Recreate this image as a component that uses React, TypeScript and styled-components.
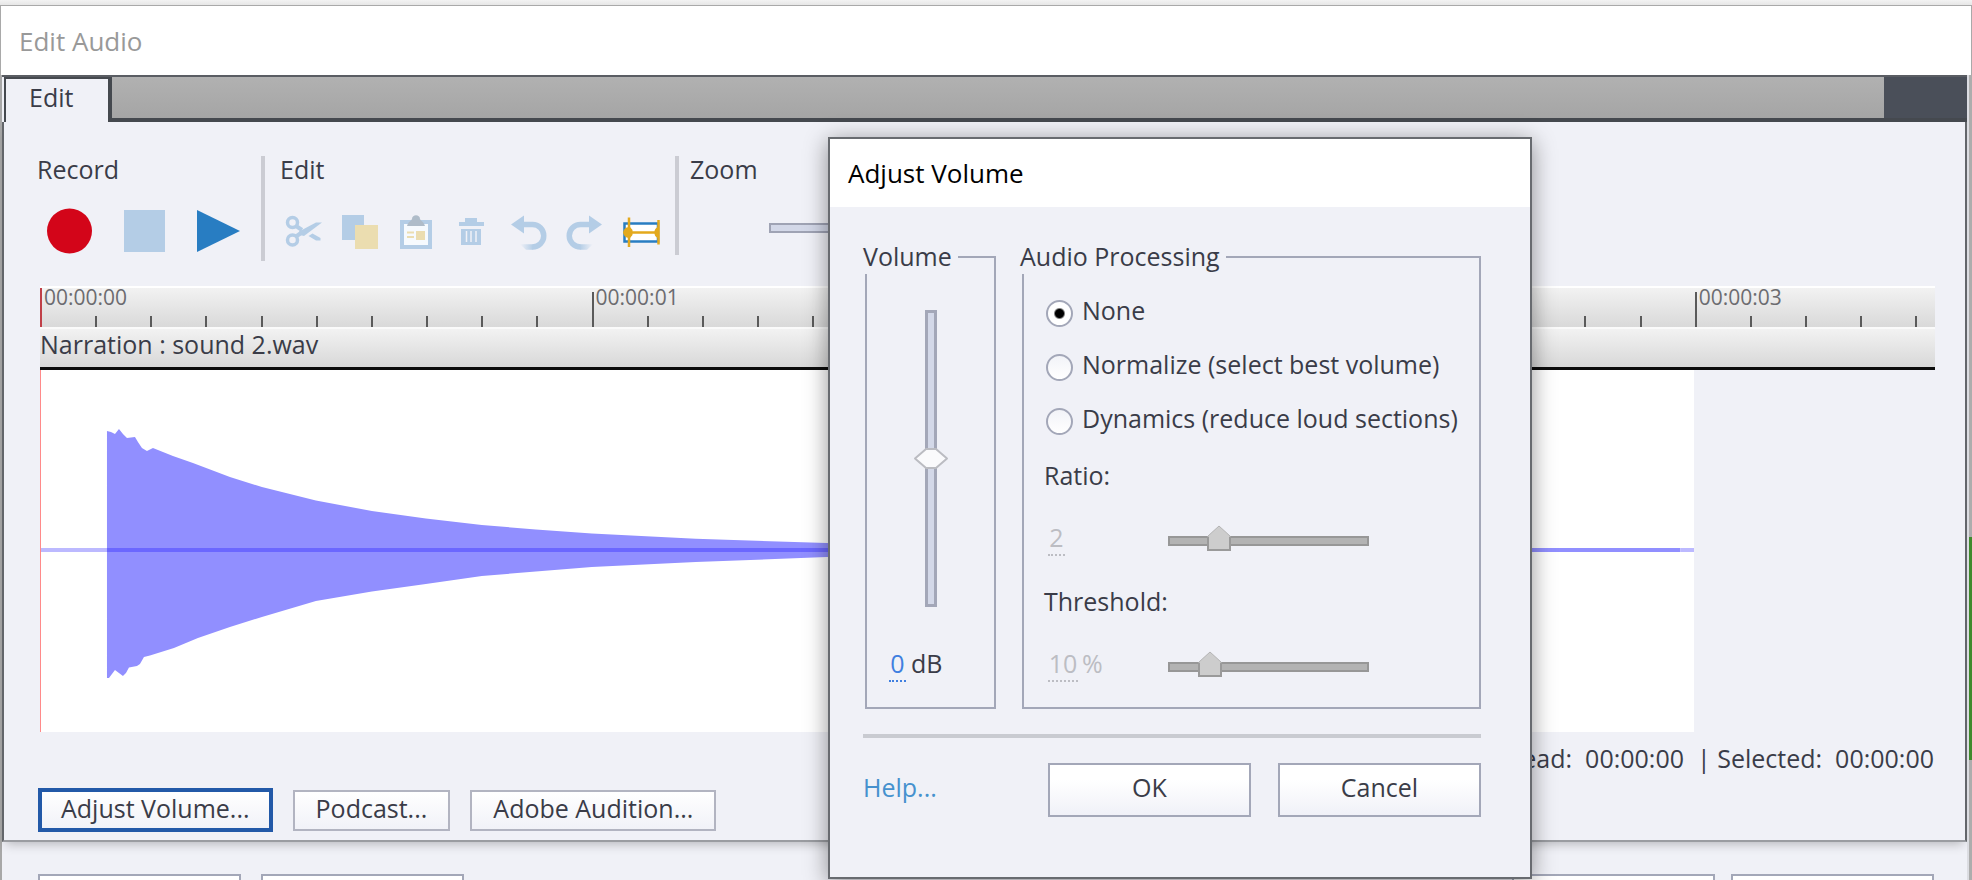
import React, { useState } from "react";
import styled, { createGlobalStyle, css } from "styled-components";

const color = {
  panel: "#f0f1f7",
  text: "#3a3c48",
  line: "#a3a7b8",
  dark: "#45494f",
  paleBlue: "#b4cde6",
  paleGold: "#ebddb0",
  blue: "#287dc2",
  gold: "#e3a91d",
};

const GlobalStyle = createGlobalStyle`
  * { box-sizing: border-box; }
  body {
    margin: 0;
    background: #f0f0f0;
    color: ${color.text};
    font: 25px/34px "Open Sans", "Noto Sans", sans-serif;
  }
  button, input { font: inherit; color: inherit; }
`;

const Desktop = styled.div`
  position: relative;
  height: 100vh;
  overflow: hidden;
  display: flex;
  flex-direction: column;
  padding-top: 5px;
  background: linear-gradient(#f3f3f3, #e6e6e6 5px);
`;

const TitleBar = styled.header<{ $active?: boolean }>`
  display: flex;
  align-items: center;
  height: ${(p) => (p.$active ? 68 : 70)}px;
  flex: none;
  padding: 0 18px;
  background: #fff;
  color: ${(p) => (p.$active ? "#000" : "#999")};
  ${(p) =>
    !p.$active &&
    css`
      border: 1px solid #a9a9a9;
      border-bottom: 0;
    `}
`;

const Title = styled.h1`
  margin: 0;
  font-size: 26px;
  font-weight: 400;
`;

const WindowBody = styled.div`
  flex: 1;
  display: flex;
  min-height: 0;
  background: ${color.panel};
`;

const LeftFrame = styled.div`
  width: 2px;
  background: #a8a8a8;
`;

const RightFrame = styled.div`
  width: 5px;
  flex: none;
  border-left: 2px solid #dcdde2;
  background: linear-gradient(#adadad 462px, #3f8a2c 462px, #3f8a2c 685px, #adadad 685px);
`;

const Content = styled.div`
  flex: 1;
  min-width: 0;
`;

const TabBar = styled.nav`
  display: flex;
  height: 47px;
  border-top: 2px solid #5a5d63;
`;

const Tab = styled.button`
  width: 108px;
  padding: 0 0 7px 23px;
  border: solid ${color.dark};
  border-width: 2px 4px 0 2px;
  margin-left: 2px;
  background: ${color.panel};
  text-align: left;
`;

const TabFiller = styled.div`
  flex: 1;
  border-bottom: 4px solid ${color.dark};
  background: linear-gradient(#b1b1b1, #a5a5a5);
`;

const TabEnd = styled.div`
  width: 83px;
  background: #4a4f59;
  border-bottom: 4px solid ${color.dark};
`;

const Panel = styled.main`
  padding: 34px 30px 8px 32px;
  border: 2px solid #63666b;
  border-top: 0;
  border-bottom-color: #9a9ca1;
  box-shadow: 0 6px 10px -4px rgba(0, 0, 0, 0.25);
`;

const Toolbar = styled.div`
  display: flex;
  align-items: flex-start;
  height: 130px;
`;

const ToolGroup = styled.section<{ $width: number; $inset: number }>`
  width: ${(p) => p.$width}px;
  padding-left: ${(p) => p.$inset}px;
`;

const GroupLabel = styled.h2`
  margin: 0 0 26px;
  padding-left: 1px;
  font-size: 25px;
  font-weight: 400;
  line-height: 26px;
`;

const Divider = styled.div<{ $height: number }>`
  width: 4px;
  height: ${(p) => p.$height}px;
  background: #cbccd3;
`;

const RecordTools = styled.div`
  display: flex;
  align-items: center;
  gap: 32px;
  height: 46px;
  padding-left: 11px;
`;

const EditTools = styled.div`
  display: flex;
  align-items: center;
  height: 46px;
  margin-left: -3px;
`;

const ZoomTools = styled.div`
  display: flex;
  height: 46px;
  padding: 4px 0 0 80px;
`;

const IconButton = styled.button<{ $width?: number }>`
  display: flex;
  justify-content: center;
  flex: none;
  width: ${(p) => (p.$width ? p.$width + "px" : "auto")};
  padding: 0;
  border: 0;
  background: none;
`;

const Track = styled.div`
  margin-left: 4px;
`;

const Ruler = styled.div`
  display: flex;
  height: 41px;
  border-top: 2px solid #fff;
  background: linear-gradient(#f2f2f2, #d9d9d9);
`;

const Mark = styled.div<{ $major: boolean; $start: boolean }>`
  display: flex;
  align-items: flex-end;
  flex: 0 0 2.911%;
  min-width: 0;
  white-space: nowrap;
  font-size: 21px;
  line-height: 18px;
  color: #6c6c70;
  &:last-child {
    flex: 1;
  }
  &::before {
    content: "";
    flex: none;
    width: 2px;
    height: ${(p) => (p.$start ? "100%" : p.$major ? "35px" : "11px")};
    background: ${(p) => (p.$start ? "#c04048" : "#5a5a5a")};
  }
`;

const MarkLabel = styled.span`
  align-self: flex-start;
  padding-left: 2px;
`;

const ClipName = styled.div`
  height: 43px;
  border-top: 2px solid #fafafa;
  border-bottom: 3px solid #0c0c0c;
  background: linear-gradient(#f2f2f2, #d8d8d8);
  line-height: 30px;
`;

const Waveform = styled.div`
  width: 87.3%;
  height: 362px;
  border-left: 1px solid #ff8a8a;
  background: #fff;
  svg { display: block; width: 100%; height: 100%; }
`;

const Status = styled.p`
  margin: 9px 1px 13px;
  text-align: right;
  white-space: pre;
`;

const ButtonRow = styled.div`
  display: flex;
  align-items: center;
  gap: 20px;
  margin-left: 2px;
`;

const PushButton = styled.button<{ $focused?: boolean }>`
  height: ${(p) => (p.$focused ? 44 : 41)}px;
  padding: 0 ${(p) => (p.$focused ? 19 : 21)}px 4px;
  border: ${(p) => (p.$focused ? "4px solid #2259a8" : "2px solid #b2b4c1")};
  background: linear-gradient(#fff, #f1f2f8);
  line-height: 30px;
`;

const Footer = styled.footer`
  display: flex;
  justify-content: space-between;
  padding: 32px 33px 0 36px;
`;

const FooterButtons = styled.div<{ $gap: number }>`
  display: flex;
  gap: ${(p) => p.$gap}px;
`;

const DialogButton = styled.button<{ $height: number }>`
  width: 203px;
  height: ${(p) => p.$height}px;
  padding: 0 0 7px;
  border: 2px solid ${color.line};
  background: linear-gradient(#fff 30%, #f0f1f8);
`;

const Dialog = styled.div`
  position: absolute;
  left: 828px;
  top: 137px;
  width: 704px;
  border: 2px solid #686b70;
  background: ${color.panel};
  box-shadow: 0 4px 22px rgba(0, 0, 0, 0.42);
`;

const DialogBody = styled.div`
  padding: 33px 49px 60px 33px;
`;

const Groups = styled.div`
  display: flex;
  gap: 26px;
  margin-left: 2px;
`;

const Group = styled.fieldset<{ $grow?: boolean }>`
  flex: ${(p) => (p.$grow ? "1" : "0 0 131px")};
  min-width: 0;
  margin: 0;
  padding: 0 0 25px;
  border: 2px solid ${color.line};
`;

const Legend = styled.legend`
  margin-left: -4px;
  padding: 0 6px 2px 0;
  background: ${color.panel};
  line-height: 32px;
`;

const VolumeControls = styled.div`
  display: flex;
  flex-direction: column;
  align-items: center;
  gap: 39px;
  padding-top: 36px;
`;

const ProcessingControls = styled.div`
  display: flex;
  flex-direction: column;
  padding: 12px 0 0 20px;
`;

const RadioRow = styled.label`
  display: flex;
  align-items: center;
  gap: 9px;
  height: 54px;
  padding-left: 2px;
`;

const RadioText = styled.span`
  padding-bottom: 6px;
  white-space: nowrap;
`;

const Radio = styled.input.attrs({ type: "radio" })`
  appearance: none;
  flex: none;
  width: 27px;
  height: 27px;
  margin: 0;
  border: 2px solid ${color.line};
  border-radius: 50%;
  background: linear-gradient(#f2f3f8, #fff);
  &:checked {
    background: radial-gradient(circle, #000 4px, #fff 6px);
  }
`;

const FieldLabel = styled.label<{ $top: number }>`
  margin-top: ${(p) => p.$top}px;
`;

const ValueRow = styled.div`
  display: flex;
  align-items: center;
  margin: 28px 0 0 4px;
  color: #bcbdc3;
`;

const VolumeValue = styled.div`
  display: flex;
  align-self: flex-start;
  gap: 5px;
  padding-left: 22px;
`;

const HotText = styled.input<{ $wide?: boolean; $active?: boolean }>`
  width: ${(p) => (p.$wide ? 30 : 17)}px;
  height: 36px;
  padding: 0;
  border: 0;
  border-bottom: 2px dotted ${(p) => (p.$active ? "#3f7fe0" : "#bcbdc3")};
  background: none;
  color: ${(p) => (p.$active ? "#3f7fe0" : "#bcbdc3")};
  text-align: center;
`;

const ValueCell = styled.div`
  display: flex;
  gap: 4px;
  width: 120px;
`;

const pentagon = `url("data:image/svg+xml,%3Csvg xmlns='http://www.w3.org/2000/svg' width='24' height='26'%3E%3Cpath d='M12 1L23 11V25H1V11z' fill='%23cdcdcd'/%3E%3Cpath d='M12 1L23 11V25H1V11z' fill='none' stroke='%23b4b4b4' stroke-width='1'/%3E%3Cpath d='M1 12V25H23V12' fill='none' stroke='%239a9a9a' stroke-width='2'/%3E%3C/svg%3E")`;
const diamond = `url("data:image/svg+xml,%3Csvg xmlns='http://www.w3.org/2000/svg' width='36' height='24'%3E%3Cpath d='M13 2H23L34 11.5L23 21H13L2 11.5z' fill='%23fafafc' stroke='%23bbbcc2' stroke-width='2' stroke-linejoin='round'/%3E%3C/svg%3E")`;

const HorizontalSlider = styled.input.attrs({ type: "range" })<{ $tinted?: boolean }>`
  appearance: none;
  width: 201px;
  height: 26px;
  margin: 0;
  background:
    linear-gradient(${(p) => (p.$tinted ? "#d3d8e8, #d3d8e8" : "#b3b3b3, #b3b3b3")}) 50% 13px / calc(100% - 4px) 6px no-repeat,
    linear-gradient(${(p) => (p.$tinted ? "#9fa3b4, #9fa3b4" : "#979797, #979797")}) 0 11px / 100% 10px no-repeat;
  &::-webkit-slider-thumb {
    appearance: none;
    width: 24px;
    height: 26px;
    background: ${pentagon};
  }
`;

const VerticalSlider = styled.input.attrs({ type: "range" })`
  appearance: none;
  writing-mode: vertical-lr;
  direction: rtl;
  width: 36px;
  height: 297px;
  margin: 0;
  background:
    linear-gradient(#d3d8e8, #d3d8e8) 50% 50% / 6px calc(100% - 6px) no-repeat,
    linear-gradient(${color.line}, ${color.line}) 50% 0 / 12px 100% no-repeat;
  &::-webkit-slider-thumb {
    appearance: none;
    width: 36px;
    height: 24px;
    background: ${diamond};
  }
`;

const Rule = styled.hr`
  height: 4px;
  margin: 25px 0;
  border: 0;
  background: #c9cbd1;
`;

const DialogActions = styled.div`
  display: flex;
  align-items: center;
  gap: 27px;
`;

const HelpLink = styled.a`
  margin-right: auto;
  padding-bottom: 6px;
  color: #4691ce;
  text-decoration: none;
`;

const CutIcon = () => (
  <svg width="40" height="40" fill="none" stroke={color.paleBlue}>
    <circle cx="8.500" cy="11.500" r="5" strokeWidth="3.500" />
    <circle cx="8.500" cy="29" r="5" strokeWidth="3.500" />
    <path d="M12 25.500L17 22" strokeWidth="4" />
    <path d="M12 15L18 19" strokeWidth="4" />
    <path d="M15 20.500L32 11.500H38L20 25L16 24z" fill={color.paleBlue} stroke="none" />
    <path d="M24.500 25L28.500 22.500L36.500 27V29.500H32z" fill={color.paleBlue} stroke="none" />
  </svg>
);

const CopyIcon = () => (
  <svg width="40" height="40">
    <path d="M2 4H24V29H2z" fill={color.paleBlue} />
    <path d="M15 14H38V38H15z" fill={color.paleGold} />
  </svg>
);

const PasteIcon = () => (
  <svg width="40" height="40">
    <path d="M6 11H34V36H6z" fill="#f6fafe" stroke={color.paleBlue} strokeWidth="4" />
    <path d="M11 15C12 11 15 10 16 8C16 3 24 3 24 8C25 10 28 11 29 15z" fill="#afbcc9" />
    <path d="M11 21.500H18M11 26H18" stroke={color.paleGold} strokeWidth="2" />
    <path d="M20 20H29V29H20z" fill={color.paleGold} />
  </svg>
);

const TrashIcon = () => (
  <svg width="40" height="40" fill={color.paleBlue}>
    <path d="M13 7H25V11H32V15H7V11H13z" />
    <path d="M9 18H29V34H9z" />
    <path d="M14.500 20V31M19 20V31M24 20V31" stroke={color.panel} strokeWidth="1.500" />
  </svg>
);

const UndoIcon = ({ flip }: { flip?: boolean }) => {
  const fade = flip ? "redo-fade" : "undo-fade";
  return (
    <svg width="40" height="40">
      <defs>
        <linearGradient id={fade} gradientUnits="userSpaceOnUse" x1="12" y1="0" x2="25" y2="0">
          <stop offset="0" stopColor={color.paleBlue} stopOpacity="0" />
          <stop offset="1" stopColor={color.paleBlue} />
        </linearGradient>
      </defs>
      <g transform={flip ? "matrix(-1 0 0 1 41 0)" : undefined}>
        <path d="M3 13.500L16 4.500V22.500z" fill={color.paleBlue} />
        <path d="M15 13.500H24.500A11.200 11.200 0 0 1 24.500 36" fill="none" stroke={color.paleBlue} strokeWidth="5.500" />
        <path d="M12 33.250H25V38.750H18z" fill={`url(#${fade})`} />
      </g>
    </svg>
  );
};

const TrimIcon = () => (
  <svg width="40" height="40">
    <path d="M4.500 12.500H38V30.500H4.500z" fill="#fff" stroke={color.blue} strokeWidth="2.500" />
    <path d="M9 6.500V36M38.500 9V33.500M6 21.500H38" stroke={color.gold} strokeWidth="2.500" fill="none" />
    <path d="M3 21.500C4 17 7 16 10 16L12.500 19V24L10 27C7 27 4 26 3 21.500zM39 15.500C35 17 34.500 19 34.500 21.500S35 26 39 27.500z" fill={color.gold} />
  </svg>
);

const WavePicture = () => (
  <svg viewBox="0 0 1654 362" preserveAspectRatio="none" aria-hidden="true">
    <path
      fill="#918fff"
      d="M66 61L70 62L74 64L78 59L82 64L86 68L94 67L97 72L101 78L106 81L112 78L122 82L132 86L152 93L189 107L221 117L275 130.500L331 141L385 148.500L441 155L495 159.500L551 163.500L655 168.700L786 173L900 176L1050 178H1640V182H1050L900 185L786 187L655 192L551 197L495 201.500L441 206L385 214L331 221.500L275 231L221 247L189 257L157 268L133 278L109 285.500L103 287L99 294L96 296L88 297.500L85 303L82 306L74 300L68 308H66z"
    />
    <path fill="#bcb9ff" d="M0 178H66V182H0zM1640 178H1654V182H1640z" />
    <path fill="#6b67ff" d="M66 178H1000V182H66z" />
  </svg>
);

const marks = Array.from({ length: 35 }, (_, i) => i);

const modes = [
  ["none", "None"],
  ["normalize", "Normalize (select best volume)"],
  ["dynamics", "Dynamics (reduce loud sections)"],
];

export default function App() {
  const [volume, setVolume] = useState(0);
  const [mode, setMode] = useState("none");

  return (
    <Desktop>
      <GlobalStyle />
      <TitleBar>
        <Title>Edit Audio</Title>
      </TitleBar>
      <WindowBody>
        <LeftFrame />
        <Content>
          <TabBar>
            <Tab type="button">Edit</Tab>
            <TabFiller />
            <TabEnd />
          </TabBar>
          <Panel>
            <Toolbar>
              <ToolGroup $width={225} $inset={0}>
                <GroupLabel>Record</GroupLabel>
                <RecordTools>
                  <IconButton type="button">
                    <svg width="45" height="46"><circle cx="22.500" cy="23" r="22.500" fill="#d30519" /></svg>
                  </IconButton>
                  <IconButton type="button">
                    <svg width="41" height="42"><rect width="41" height="42" fill={color.paleBlue} /></svg>
                  </IconButton>
                  <IconButton type="button">
                    <svg width="43" height="42"><path d="M0 0L43 21L0 42z" fill={color.blue} /></svg>
                  </IconButton>
                </RecordTools>
              </ToolGroup>
              <Divider $height={105} />
              <ToolGroup $width={410} $inset={14}>
                <GroupLabel>Edit</GroupLabel>
                <EditTools>
                  <IconButton type="button" $width={56}><CutIcon /></IconButton>
                  <IconButton type="button" $width={56}><CopyIcon /></IconButton>
                  <IconButton type="button" $width={56}><PasteIcon /></IconButton>
                  <IconButton type="button" $width={56}><TrashIcon /></IconButton>
                  <IconButton type="button" $width={56}><UndoIcon /></IconButton>
                  <IconButton type="button" $width={56}><UndoIcon flip /></IconButton>
                  <IconButton type="button" $width={56}><TrimIcon /></IconButton>
                </EditTools>
              </ToolGroup>
              <Divider $height={99} />
              <ToolGroup $width={400} $inset={10}>
                <GroupLabel id="zoom-label">Zoom</GroupLabel>
                <ZoomTools>
                  <HorizontalSlider $tinted aria-labelledby="zoom-label" defaultValue={60} />
                </ZoomTools>
              </ToolGroup>
            </Toolbar>

            <Track>
              <Ruler>
                {marks.map((i) => (
                  <Mark key={i} $major={i % 10 === 0} $start={i === 0}>
                    {i % 10 === 0 && <MarkLabel>{`00:00:0${i / 10}`}</MarkLabel>}
                  </Mark>
                ))}
              </Ruler>
              <ClipName>Narration : sound 2.wav</ClipName>
              <Waveform>
                <WavePicture />
              </Waveform>
            </Track>

            <Status>{"Playhead:  00:00:00  | Selected:  00:00:00"}</Status>
            <ButtonRow>
              <PushButton type="button" $focused>Adjust Volume...</PushButton>
              <PushButton type="button">Podcast...</PushButton>
              <PushButton type="button">Adobe Audition...</PushButton>
            </ButtonRow>
          </Panel>
          <Footer>
            <FooterButtons $gap={20}>
              <DialogButton type="button" $height={41} />
              <DialogButton type="button" $height={41} />
            </FooterButtons>
            <FooterButtons $gap={16}>
              <DialogButton type="button" $height={41} />
              <DialogButton type="button" $height={41} />
            </FooterButtons>
          </Footer>
        </Content>
        <RightFrame />
      </WindowBody>

      <Dialog role="dialog" aria-labelledby="dialog-title">
        <TitleBar $active>
          <Title as="h2" id="dialog-title">Adjust Volume</Title>
        </TitleBar>
        <DialogBody>
          <Groups>
            <Group>
              <Legend id="volume-label">Volume</Legend>
              <VolumeControls>
                <VerticalSlider
                  aria-labelledby="volume-label"
                  min={-50}
                  max={50}
                  value={volume}
                  onChange={(e) => setVolume(Number(e.target.value))}
                />
                <VolumeValue>
                  <HotText
                    id="volume-value"
                    $active
                    value={volume}
                    onChange={(e) => setVolume(Number(e.target.value) || 0)}
                  />
                  <label htmlFor="volume-value">dB</label>
                </VolumeValue>
              </VolumeControls>
            </Group>
            <Group $grow>
              <Legend>Audio Processing</Legend>
              <ProcessingControls>
                {modes.map(([id, text]) => (
                  <RadioRow key={id}>
                    <Radio name="mode" checked={mode === id} onChange={() => setMode(id)} />
                    <RadioText>{text}</RadioText>
                  </RadioRow>
                ))}
                <FieldLabel htmlFor="ratio" id="ratio-label" $top={10}>Ratio:</FieldLabel>
                <ValueRow>
                  <ValueCell>
                    <HotText id="ratio" defaultValue="2" disabled />
                  </ValueCell>
                  <HorizontalSlider aria-labelledby="ratio-label" min={0} max={9} defaultValue={2} disabled />
                </ValueRow>
                <FieldLabel htmlFor="threshold" id="threshold-label" $top={28}>Threshold:</FieldLabel>
                <ValueRow>
                  <ValueCell>
                    <HotText id="threshold" $wide defaultValue="10" disabled />
                    <span>%</span>
                  </ValueCell>
                  <HorizontalSlider aria-labelledby="threshold-label" min={0} max={60} defaultValue={10} disabled />
                </ValueRow>
              </ProcessingControls>
            </Group>
          </Groups>
          <Rule />
          <DialogActions>
            <HelpLink href="#help">Help...</HelpLink>
            <DialogButton type="button" $height={54}>OK</DialogButton>
            <DialogButton type="button" $height={54}>Cancel</DialogButton>
          </DialogActions>
        </DialogBody>
      </Dialog>
    </Desktop>
  );
}
